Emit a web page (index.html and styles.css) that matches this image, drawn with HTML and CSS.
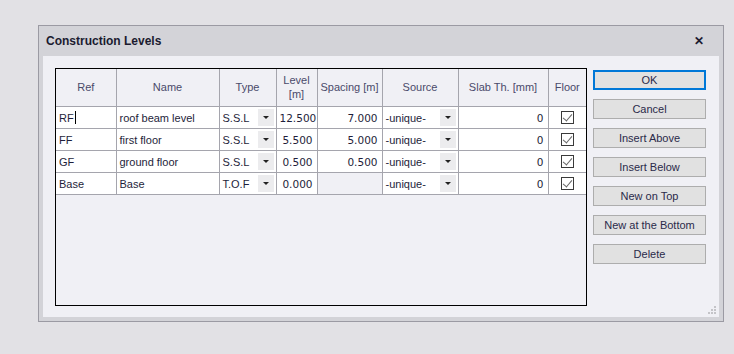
FILE: index.html
```html
<!DOCTYPE html>
<html lang="en">
<head>
  <meta charset="UTF-8" />
  <title>Construction Levels</title>
  <link rel="stylesheet" href="styles.css">
</head>
<body>
  <div class="dialog">
    <div class="titlebar">
      <span class="title">Construction Levels</span>
      <span class="close">&#x2715;</span>
    </div>
    <div class="panel">
      <div class="grid">
        <table>
          <colgroup>
            <col class="c-ref"><col class="c-name"><col class="c-type"><col class="c-level">
            <col class="c-spacing"><col class="c-source"><col class="c-slab"><col class="c-floor">
          </colgroup>
          <thead>
            <tr>
              <th>Ref</th><th>Name</th><th>Type</th><th>Level<br>[m]</th>
              <th>Spacing [m]</th><th>Source</th><th>Slab Th. [mm]</th><th>Floor</th>
            </tr>
          </thead>
          <tbody>
            <tr>
              <td><span class="caret">RF</span></td><td>roof beam level</td>
              <td class="combo"><span>S.S.L</span><i class="drop"></i></td>
              <td class="num">12.500</td><td class="num">7.000</td>
              <td class="combo"><span>-unique-</span><i class="drop"></i></td>
              <td class="num">0</td><td class="chk"><i class="box"></i></td>
            </tr>
            <tr>
              <td>FF</td><td>first floor</td>
              <td class="combo"><span>S.S.L</span><i class="drop"></i></td>
              <td class="num">5.500</td><td class="num">5.000</td>
              <td class="combo"><span>-unique-</span><i class="drop"></i></td>
              <td class="num">0</td><td class="chk"><i class="box"></i></td>
            </tr>
            <tr>
              <td>GF</td><td>ground floor</td>
              <td class="combo"><span>S.S.L</span><i class="drop"></i></td>
              <td class="num">0.500</td><td class="num">0.500</td>
              <td class="combo"><span>-unique-</span><i class="drop"></i></td>
              <td class="num">0</td><td class="chk"><i class="box"></i></td>
            </tr>
            <tr>
              <td>Base</td><td>Base</td>
              <td class="combo"><span>T.O.F</span><i class="drop"></i></td>
              <td class="num">0.000</td><td class="empty"></td>
              <td class="combo"><span>-unique-</span><i class="drop"></i></td>
              <td class="num">0</td><td class="chk"><i class="box"></i></td>
            </tr>
          </tbody>
        </table>
      </div>
      <div class="buttons">
        <button class="btn default">OK</button>
        <button class="btn">Cancel</button>
        <button class="btn">Insert Above</button>
        <button class="btn">Insert Below</button>
        <button class="btn">New on Top</button>
        <button class="btn">New at the Bottom</button>
        <button class="btn">Delete</button>
      </div>
      <div class="grip"></div>
    </div>
  </div>
</body>
</html>
```

FILE: styles.css
```css
* {
  padding: 0;
  margin: 0;
  box-sizing: border-box;
}

body {
  width: 734px;
  height: 354px;
  background: #e2e1e5;
  font-family: "Liberation Sans", Arial, sans-serif;
  font-size: 11px;
  color: #1e1e3a;
  padding: 25px 0 0 38px;
}

.dialog {
  width: 686px;
  height: 297px;
  border: 1px solid #9b9aa3;
  background: #d3d3d8;
  padding: 0 4px 4px 4px;
  display: flex;
  flex-direction: column;
}

.titlebar {
  height: 30px;
  display: flex;
  align-items: center;
  justify-content: space-between;
  padding: 0 15px 0 3px;
}

.title {
  font-weight: bold;
  font-size: 12px;
  color: #1b1b30;
}

.close {
  font-size: 12px;
  font-weight: bold;
  color: #1b1b30;
}

.panel {
  flex: 1;
  background: #f0f0f5;
  display: flex;
  padding: 12px 0 0 12px;
  position: relative;
}

.grid {
  width: 532px;
  height: 238px;
  border: 1px solid #000;
  background: #f0f0f5;
}

table {
  border-collapse: collapse;
  table-layout: fixed;
  width: 530px;
}

.c-ref { width: 60px; }
.c-name { width: 103px; }
.c-type { width: 57px; }
.c-level { width: 41px; }
.c-spacing { width: 65px; }
.c-source { width: 76px; }
.c-slab { width: 90px; }
.c-floor { width: 38px; }

th {
  height: 37px;
  font-weight: normal;
  color: #4a4a6a;
  background: #f0f0f5;
  border-left: 1px solid #a5a5ad;
  border-bottom: 1px solid #a5a5ad;
  line-height: 14px;
  white-space: nowrap;
}

th:first-child,
td:first-child {
  border-left: none;
}

td {
  height: 22px;
  background: #fff;
  border-left: 1px solid #a5a5ad;
  border-bottom: 1px solid #a5a5ad;
  padding: 1px 3px 0;
  white-space: nowrap;
  overflow: hidden;
}

td.num {
  text-align: right;
  font-family: "DejaVu Sans", sans-serif;
  font-size: 10.5px;
  padding-right: 4px;
}

td.empty {
  background: #f0f0f5;
}

td.combo span {
  display: inline-block;
  vertical-align: middle;
}

td.combo {
  position: relative;
}

.drop {
  position: absolute;
  right: 2px;
  top: 2px;
  width: 16px;
  height: 17px;
  background: #ececee;
}

.drop::after {
  content: "";
  position: absolute;
  left: 5px;
  top: 7px;
  border-left: 3px solid transparent;
  border-right: 3px solid transparent;
  border-top: 3px solid #222;
}

.caret::after {
  content: "";
  display: inline-block;
  width: 1px;
  height: 13px;
  background: #000;
  vertical-align: -2px;
  margin-left: 1px;
}

td.chk {
  text-align: center;
}

.box {
  display: inline-block;
  width: 13px;
  height: 13px;
  border: 1px solid #3a3a3a;
  position: relative;
  vertical-align: middle;
}

.box::after {
  content: "";
  position: absolute;
  left: 3px;
  top: 0px;
  width: 4px;
  height: 8px;
  border-right: 1px solid #666;
  border-bottom: 1px solid #666;
  transform: rotate(40deg);
}

.buttons {
  display: flex;
  flex-direction: column;
  gap: 9px;
  margin-left: 6px;
  padding-top: 2px;
}

.btn {
  width: 113px;
  height: 20px;
  background: #e1e1e1;
  border: 1px solid #adadad;
  font-family: "Liberation Sans", Arial, sans-serif;
  font-size: 11px;
  color: #2a2a4a;
}

.btn.default {
  border: 2px solid #0078d7;
}

.grip {
  position: absolute;
  right: 3px;
  bottom: 3px;
  width: 8px;
  height: 8px;
  background:
    linear-gradient(#c4c4c8, #c4c4c8) 6px 0 / 2px 2px no-repeat,
    linear-gradient(#c4c4c8, #c4c4c8) 3px 3px / 2px 2px no-repeat,
    linear-gradient(#c4c4c8, #c4c4c8) 6px 3px / 2px 2px no-repeat,
    linear-gradient(#c4c4c8, #c4c4c8) 0 6px / 2px 2px no-repeat,
    linear-gradient(#c4c4c8, #c4c4c8) 3px 6px / 2px 2px no-repeat,
    linear-gradient(#c4c4c8, #c4c4c8) 6px 6px / 2px 2px no-repeat;
}
```
